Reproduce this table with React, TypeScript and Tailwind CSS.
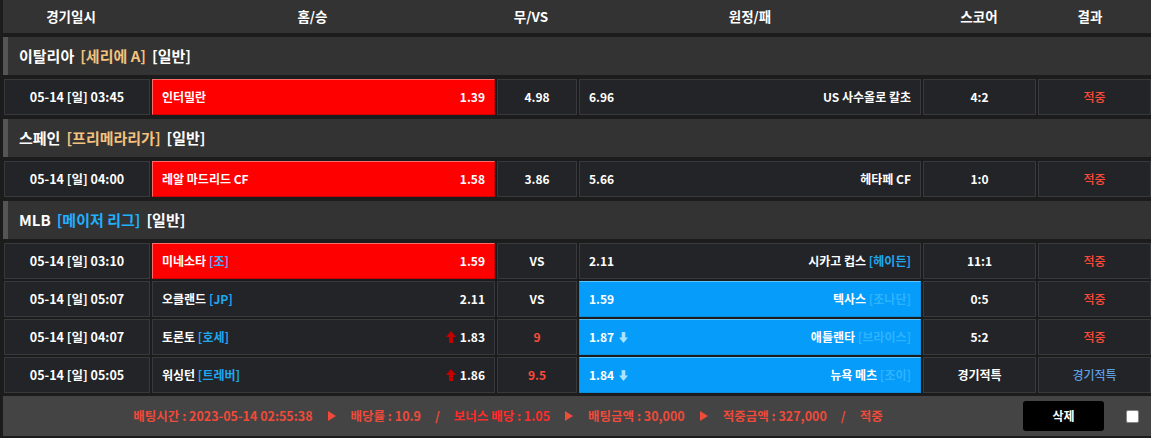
import React from 'react';

type Team = { name: string; tag?: string };

type Match = {
  date: string;
  home: Team;
  homeOdds: string;
  homeUp?: boolean;
  draw: string;
  drawRed?: boolean;
  away: Team;
  awayOdds: string;
  awayDown?: boolean;
  pick: 'home' | 'away';
  score: string;
  result: string;
  special?: boolean;
};

type League = {
  name: string;
  sub: string;
  subColor: string;
  matches: Match[];
};

const leagues: League[] = [
  {
    name: '이탈리아',
    sub: '[세리에 A]',
    subColor: 'text-[#f4c27e]',
    matches: [
      {
        date: '05-14 [일] 03:45',
        home: { name: '인터밀란' },
        homeOdds: '1.39',
        draw: '4.98',
        away: { name: 'US 사수올로 칼초' },
        awayOdds: '6.96',
        pick: 'home',
        score: '4:2',
        result: '적중',
      },
    ],
  },
  {
    name: '스페인',
    sub: '[프리메라리가]',
    subColor: 'text-[#f4c27e]',
    matches: [
      {
        date: '05-14 [일] 04:00',
        home: { name: '레알 마드리드 CF' },
        homeOdds: '1.58',
        draw: '3.86',
        away: { name: '헤타페 CF' },
        awayOdds: '5.66',
        pick: 'home',
        score: '1:0',
        result: '적중',
      },
    ],
  },
  {
    name: 'MLB',
    sub: '[메이저 리그]',
    subColor: 'text-[#1fb0ff]',
    matches: [
      {
        date: '05-14 [일] 03:10',
        home: { name: '미네소타', tag: '[조]' },
        homeOdds: '1.59',
        draw: 'VS',
        away: { name: '시카고 컵스', tag: '[헤이든]' },
        awayOdds: '2.11',
        pick: 'home',
        score: '11:1',
        result: '적중',
      },
      {
        date: '05-14 [일] 05:07',
        home: { name: '오클랜드', tag: '[JP]' },
        homeOdds: '2.11',
        draw: 'VS',
        away: { name: '텍사스', tag: '[조나단]' },
        awayOdds: '1.59',
        pick: 'away',
        score: '0:5',
        result: '적중',
      },
      {
        date: '05-14 [일] 04:07',
        home: { name: '토론토', tag: '[호세]' },
        homeOdds: '1.83',
        homeUp: true,
        draw: '9',
        drawRed: true,
        away: { name: '애틀랜타', tag: '[브라이스]' },
        awayOdds: '1.87',
        awayDown: true,
        pick: 'away',
        score: '5:2',
        result: '적중',
      },
      {
        date: '05-14 [일] 05:05',
        home: { name: '워싱턴', tag: '[트레버]' },
        homeOdds: '1.86',
        homeUp: true,
        draw: '9.5',
        drawRed: true,
        away: { name: '뉴욕 메츠', tag: '[조이]' },
        awayOdds: '1.84',
        awayDown: true,
        pick: 'away',
        score: '경기적특',
        result: '경기적특',
        special: true,
      },
    ],
  },
];

const font = { fontFamily: '"Noto Sans CJK KR", "Noto Sans", sans-serif' };

function UpArrow() {
  return (
    <svg width="10" height="12" viewBox="0 0 10 12" className="mr-[4px]">
      <polygon points="5,0 10,6 0,6" fill="#c40000" />
      <rect x="3" y="5" width="4" height="7" fill="#c40000" />
    </svg>
  );
}

function DownArrow() {
  return (
    <svg width="9" height="11" viewBox="0 0 10 12" className="ml-[5px]">
      <rect x="3" y="0" width="4" height="7" fill="#a8e4ff" />
      <polygon points="5,12 10,6 0,6" fill="#a8e4ff" />
    </svg>
  );
}

function Play() {
  return (
    <svg width="8" height="10" viewBox="0 0 8 10" className="mx-[15px] inline-block">
      <polygon points="0,0 8,5 0,10" fill="#f04a3a" />
    </svg>
  );
}

const cellBase = 'h-[36px] flex items-center border border-[#38393c] bg-[#232427]';
const redCell = 'h-[36px] flex items-center border border-[#cc0000] border-t-[#ff6b6b] border-l-[#ff6b6b] bg-[#ff0000]';
const blueCell = 'h-[36px] flex items-center border border-[#0a8ee0] border-t-[#5cc4ff] bg-[#059cfa]';

function MatchRow({ m }: { m: Match }) {
  const homePicked = m.pick === 'home';
  const awayPicked = m.pick === 'away';
  return (
    <div className="grid grid-cols-[146px_343px_80px_342px_113px_1fr] gap-[2px] pl-[1px]">
      <div className={`${cellBase} justify-center text-[12.5px]`}>{m.date}</div>
      <div className={`${homePicked ? redCell : cellBase} justify-between px-[9px]`}>
        <span>
          {m.home.name}
          {m.home.tag && (
            <span className={homePicked ? 'text-[#37b6ff]' : 'text-[#1fa8f0]'}> {m.home.tag}</span>
          )}
        </span>
        <span className="flex items-center">
          {m.homeUp && <UpArrow />}
          {m.homeOdds}
        </span>
      </div>
      <div className={`${cellBase} justify-center ${m.drawRed ? 'text-[#ff4a3a]' : ''}`}>{m.draw}</div>
      <div className={`${awayPicked ? blueCell : cellBase} justify-between px-[9px]`}>
        <span className="flex items-center">
          {m.awayOdds}
          {m.awayDown && <DownArrow />}
        </span>
        <span>
          {m.away.name}
          {m.away.tag && (
            <span className={awayPicked ? 'text-[#2eb3ff]' : 'text-[#1fa8f0]'}> {m.away.tag}</span>
          )}
        </span>
      </div>
      <div className={`${cellBase} justify-center`}>{m.score}</div>
      <div
        className={`${cellBase} justify-center font-medium ${m.special ? 'text-[#5e9fe0]' : 'text-[#ff4a3a]'}`}
      >
        {m.result}
      </div>
    </div>
  );
}

export default function App() {
  return (
    <div style={font} className="w-[1151px] h-[438px] bg-[#1c1c1c] pl-[3px] text-white text-[12px] font-bold overflow-hidden">
      {/* Header */}
      <div className="h-[33px] bg-[#333333] flex items-center text-[13.5px]">
        <div className="w-[136px] text-center">경기일시</div>
        <div className="w-[347px] text-center">홈/승</div>
        <div className="w-[90px] text-center">무/VS</div>
        <div className="w-[348px] text-center">원정/패</div>
        <div className="w-[110px] text-center">스코어</div>
        <div className="w-[112px] text-center">결과</div>
      </div>

      {leagues.map((lg) => (
        <div key={lg.name} className="mt-[4px]">
          <div className="h-[38px] bg-[#333333] flex items-center border-l-[5px] border-[#555555] pl-[11px] text-[15px]">
            <span>{lg.name}</span>
            <span className={`ml-[6px] ${lg.subColor}`}>{lg.sub}</span>
            <span className="ml-[6px]">[일반]</span>
          </div>
          <div className="mt-[4px] flex flex-col gap-[2px]">
            {lg.matches.map((m, i) => (
              <MatchRow key={i} m={m} />
            ))}
          </div>
        </div>
      ))}

      {/* Footer */}
      <div className="mt-[3px] h-[40px] bg-[#444444] flex items-center">
        <div className="flex-1 flex items-center justify-center text-[#f04a3a] text-[12.5px]">
          <span>배팅시간 : 2023-05-14 02:55:38</span>
          <Play />
          <span>배당률 : 10.9</span>
          <span className="mx-[14px]">/</span>
          <span className="text-[#ff2b2b]">보너스 배당 : 1.05</span>
          <Play />
          <span>배팅금액 : 30,000</span>
          <Play />
          <span>적중금액 : 327,000</span>
          <span className="mx-[14px]">/</span>
          <span>적중</span>
        </div>
        <button className="w-[81px] h-[30px] bg-black rounded-[3px] text-white text-[12px] font-bold ml-[10px]">
          삭제
        </button>
        <div className="w-[13px] h-[13px] bg-white border border-[#888] rounded-[2px] ml-[22px] mr-[12px]" />
      </div>
    </div>
  );
}
